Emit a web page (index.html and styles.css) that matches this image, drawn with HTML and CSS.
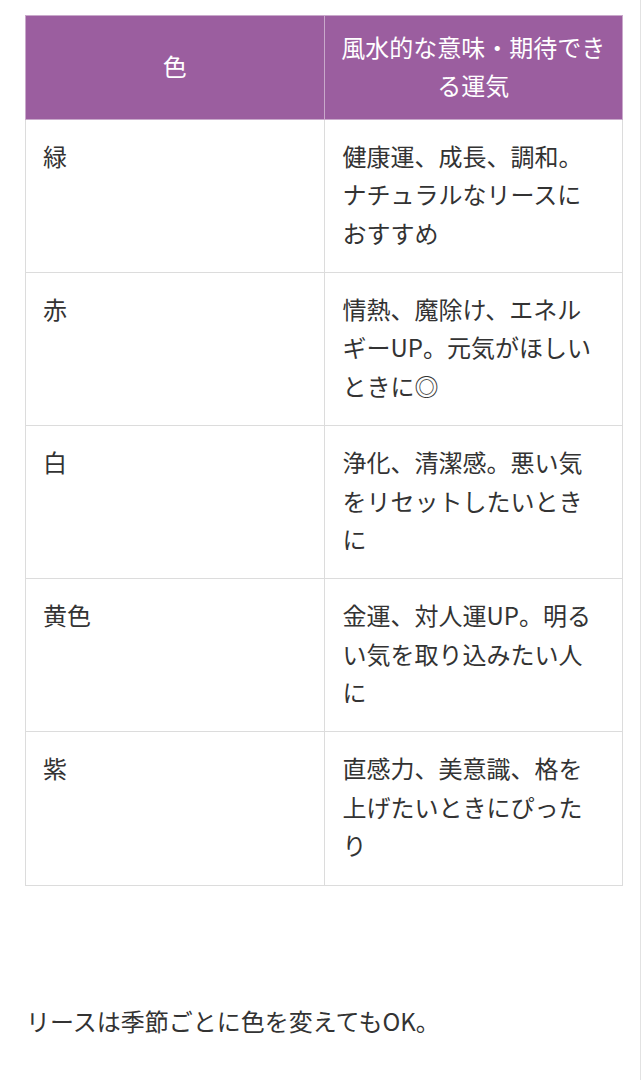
FILE: index.html
```html
<!DOCTYPE html>
<html lang="ja">
<head>
<meta charset="utf-8">
<link rel="stylesheet" href="styles.css">
</head>
<body>
<div class="page">
  <table class="fengshui">
    <thead>
      <tr><th>色</th><th>風水的な意味・期待できる運気</th></tr>
    </thead>
    <tbody>
      <tr><td>緑</td><td>健康運、成長、調和。ナチュラルなリースにおすすめ</td></tr>
      <tr><td>赤</td><td>情熱、魔除け、エネルギーUP。元気がほしいときに◎</td></tr>
      <tr><td>白</td><td>浄化、清潔感。悪い気をリセットしたいときに</td></tr>
      <tr><td>黄色</td><td>金運、対人運UP。明るい気を取り込みたい人に</td></tr>
      <tr><td>紫</td><td>直感力、美意識、格を上げたいときにぴったり</td></tr>
    </tbody>
  </table>
  <p class="note">リースは季節ごとに色を変えてもOK。</p>
</div>
</body>
</html>
```
FILE: styles.css
```css
html, body {
  margin: 0;
  padding: 0;
  background: #fff;
}
body {
  font-family: "Noto Sans CJK JP", "Noto Sans", sans-serif;
  color: #333;
  font-size: 24px;
  line-height: 1.6;
}
.page {
  width: 641px;
  min-height: 1080px;
  box-sizing: border-box;
  border-right: 1px solid #e2e2e2;
  padding: 15px 18px 0 25px;
}
.fengshui {
  width: 598px;
  border-collapse: collapse;
  table-layout: fixed;
}
.fengshui th, .fengshui td {
  border: 1px solid #dcdcdc;
  width: 50%;
  vertical-align: top;
  text-align: left;
  font-weight: normal;
}
.fengshui th {
  background: #9b5e9f;
  color: #fff;
  text-align: center;
  vertical-align: middle;
  padding: 12px 14px 14px;
  border-color: #c9a9cb;
}
.fengshui td {
  padding: 17px 17px 20px 17px;
  height: 115px;
}
.fengshui td + td {
  padding-left: 18px;
}
.note {
  margin: 116px 0 0 1px;
}
```
